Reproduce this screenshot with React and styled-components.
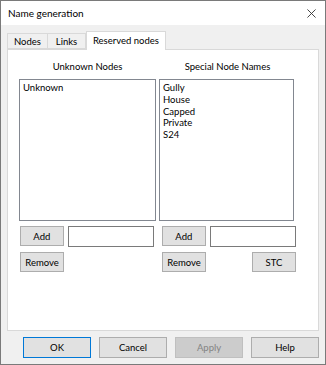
import React from 'react';
import styled, { createGlobalStyle } from 'styled-components';

const GlobalStyle = createGlobalStyle`
    body {
        margin: 0;
        font-family: Lato, 'Noto Sans', sans-serif;
        font-size: 9.5px;
        color: #000;
    }
`;

const unknownNodes = ['Unknown'];
const specialNames = ['Gully', 'House', 'Capped', 'Private', 'S24'];

function App() {
    return (
        <>
            <GlobalStyle />
            <Window>
                <TitleBar>
                    <span>Name generation</span>
                    <CloseIcon viewBox='0 0 10 10'>
                        <path d='M0.5 0.5 L9.5 9.5 M9.5 0.5 L0.5 9.5' />
                    </CloseIcon>
                </TitleBar>
                <Body>
                    <TabStrip>
                        <Tab>Nodes</Tab>
                        <Tab>Links</Tab>
                        <Tab $active>Reserved nodes</Tab>
                    </TabStrip>
                    <Panel>
                        <Column>
                            <ColumnLabel>Unknown Nodes</ColumnLabel>
                            <ListBox $width={137}>
                                {unknownNodes.map((n) => (
                                    <div key={n}>{n}</div>
                                ))}
                            </ListBox>
                            <ButtonRow $inset={1}>
                                <Button>Add</Button>
                                <TextBox />
                            </ButtonRow>
                            <ButtonRow $inset={1}>
                                <Button>Remove</Button>
                            </ButtonRow>
                        </Column>
                        <Column>
                            <ColumnLabel>Special Node Names</ColumnLabel>
                            <ListBox $width={135}>
                                {specialNames.map((n) => (
                                    <div key={n}>{n}</div>
                                ))}
                            </ListBox>
                            <ButtonRow $inset={3}>
                                <Button>Add</Button>
                                <TextBox />
                            </ButtonRow>
                            <ButtonRow $inset={3} $spread>
                                <Button>Remove</Button>
                                <Button>STC</Button>
                            </ButtonRow>
                        </Column>
                    </Panel>
                    <DialogButtons>
                        <DialogButton $default>OK</DialogButton>
                        <DialogButton>Cancel</DialogButton>
                        <DialogButton disabled>Apply</DialogButton>
                        <DialogButton>Help</DialogButton>
                    </DialogButtons>
                </Body>
            </Window>
        </>
    );
}

const Window = styled.div`
    width: 326px;
    height: 365px;
    box-sizing: border-box;
    border: 1px solid #7a7a7a;
    display: flex;
    flex-direction: column;
    background: #f0f0f0;
`;

const TitleBar = styled.div`
    height: 24px;
    background: #fff;
    display: flex;
    align-items: center;
    justify-content: space-between;
    padding: 0 7px 0 7px;
    font-size: 10px;
`;

const CloseIcon = styled.svg`
    width: 9px;
    height: 9px;
    margin-right: 2px;
    stroke: #333;
    stroke-width: 1;
    fill: none;
`;

const Body = styled.div`
    flex: 1;
    display: flex;
    flex-direction: column;
    padding: 6px 6px 0 6px;
`;

const TabStrip = styled.div`
    height: 18px;
    display: flex;
    align-items: flex-end;
`;

const Tab = styled.div`
    box-sizing: border-box;
    min-width: 39px;
    height: ${(p) => (p.$active ? '19px' : '16px')};
    margin-bottom: ${(p) => (p.$active ? '-1px' : '0')};
    margin-left: ${(p) => (p.$active ? '1px' : '0')};
    margin-right: -1px;
    padding: 0 6px;
    border: 1px solid #d9d9d9;
    border-bottom: ${(p) => (p.$active ? 'none' : '1px solid #d9d9d9')};
    background: ${(p) => (p.$active ? '#fff' : '#f0f0f0')};
    display: flex;
    align-items: center;
    justify-content: center;
    padding-bottom: ${(p) => (p.$active ? '2px' : '0')};
    position: relative;
    z-index: ${(p) => (p.$active ? 1 : 0)};
`;

const Panel = styled.div`
    box-sizing: border-box;
    height: 282px;
    width: 312px;
    border: 1px solid #d9d9d9;
    background: #fff;
    padding: 9px 0 0 11px;
    display: grid;
    grid-template-columns: 137px 137px;
    column-gap: 3px;
    align-content: start;
`;

const Column = styled.div`
    display: flex;
    flex-direction: column;
`;

const ColumnLabel = styled.div`
    height: 16px;
    line-height: 16px;
    text-align: center;
    margin-bottom: 4px;
`;

const ListBox = styled.div`
    box-sizing: border-box;
    width: ${(p) => p.$width}px;
    height: 142px;
    border: 1px solid #828790;
    padding: 2px 3px;
    line-height: 11.75px;
`;

const ButtonRow = styled.div`
    display: flex;
    gap: 4px;
    justify-content: ${(p) => (p.$spread ? 'space-between' : 'flex-start')};
    padding-left: ${(p) => p.$inset}px;
    width: 134px;
    margin-top: 5px;
`;

const Button = styled.button`
    box-sizing: border-box;
    width: 44px;
    height: 20px;
    padding: 0;
    border: 1px solid #adadad;
    background: #e1e1e1;
    font: inherit;
    color: #000;
`;

const TextBox = styled.div`
    box-sizing: border-box;
    width: 87px;
    height: 21px;
    border: 1px solid #7a7a7a;
    background: #fff;
`;

const DialogButtons = styled.div`
    display: flex;
    justify-content: flex-end;
    gap: 8px;
    margin-top: 6px;
`;

const DialogButton = styled.button`
    box-sizing: border-box;
    width: 68px;
    height: 21px;
    padding: 0;
    border: 1px solid ${(p) => (p.$default ? '#0078d7' : p.disabled ? '#bfbfbf' : '#adadad')};
    background: ${(p) => (p.disabled ? '#cccccc' : '#e1e1e1')};
    color: ${(p) => (p.disabled ? '#838383' : '#000')};
    font: inherit;
`;

export default App;
